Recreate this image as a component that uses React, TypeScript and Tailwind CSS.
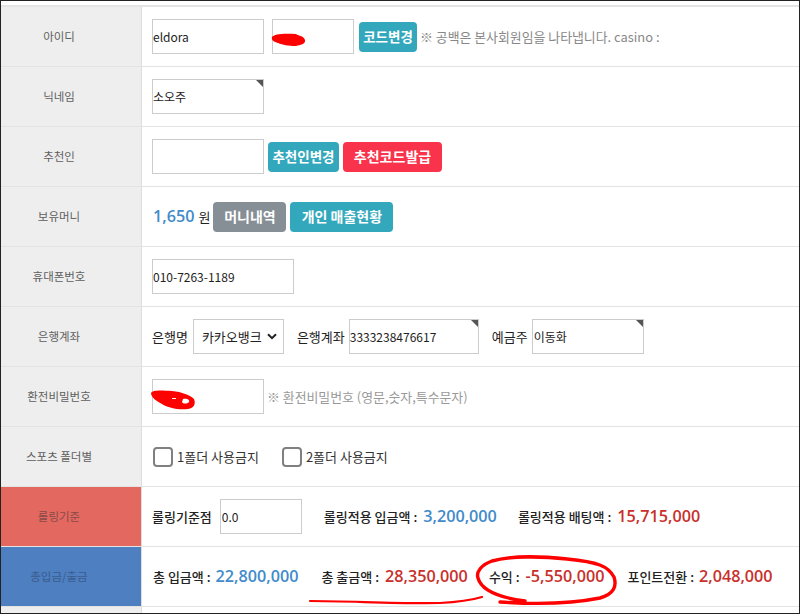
import React from "react";

const Corner = () => (
  <span className="absolute top-0 right-0 w-0 h-0 border-t-[7px] border-l-[7px] border-t-[#555555] border-l-transparent" />
);

function Field({ w, value, corner, className = "" }: { w: string; value?: string; corner?: boolean; className?: string }) {
  return (
    <div className={`relative h-[35px] shrink-0 border border-[#cccccc] bg-white flex items-center text-[12px] text-[#222222] ${w} ${className}`}>
      {value}
      {corner && <Corner />}
    </div>
  );
}

function Btn({ color, children, className = "" }: { color: string; children: React.ReactNode; className?: string }) {
  return (
    <div className={`h-[30px] shrink-0 rounded-[4px] flex items-center justify-center text-white font-bold whitespace-nowrap ${color} ${className}`}>
      {children}
    </div>
  );
}

function Row({ label, labelBg = "bg-[#eeeeee]", labelColor = "text-[#5f5f5f]", children }: { label: string; labelBg?: string; labelColor?: string; children?: React.ReactNode }) {
  return (
    <div className="flex h-[60px] border-b border-[#e3e3e3]">
      <div className={`w-[141px] shrink-0 flex items-center justify-center pr-[24px] pt-[1px] text-[11.5px] border-r border-[#dddddd] ${labelBg} ${labelColor}`}>{label}</div>
      <div className="flex-1 flex items-center min-w-0 whitespace-nowrap pl-[10px]">{children}</div>
    </div>
  );
}

const K = ({ children, className = "" }: { children: React.ReactNode; className?: string }) => (
  <span className={`text-[13px] text-[#222222] ${className}`}>{children}</span>
);
const Num = ({ c, children, className = "" }: { c: string; children: React.ReactNode; className?: string }) => (
  <span className={`text-[16.2px] font-semibold ${c} ${className}`} style={{ fontFamily: '"Open Sans", sans-serif' }}>{children}</span>
);

const Check = ({ className = "" }: { className?: string }) => (
  <span className={`inline-block w-[20px] h-[20px] rounded-[4px] border-2 border-[#808080] bg-white shrink-0 ${className}`} />
);

export default function App() {
  return (
    <div
      className="relative w-[800px] h-[614px] overflow-hidden bg-white border border-[#222222]"
      style={{ fontFamily: '"Noto Sans CJK KR", "Noto Sans", sans-serif' }}
    >
      <div className="h-[6px] bg-white border-b-2 border-[#e4e4e4]" />
      <Row label="아이디">
        <Field w="w-[112px]" value="eldora" />
        <Field w="w-[82px]" className="ml-[8px]" />
        <Btn color="bg-[#33a8bc]" className="w-[58px] ml-[5px] text-[13.5px]">코드변경</Btn>
        <span className="ml-[3px] text-[12.9px] text-[#888888]">※ 공백은 본사회원임을 나타냅니다. casino :</span>
      </Row>
      <Row label="닉네임">
        <Field w="w-[112px]" value="소오주" corner />
      </Row>
      <Row label="추천인">
        <Field w="w-[112px]" />
        <Btn color="bg-[#33a8bc]" className="w-[71px] ml-[4px] text-[13.5px]">추천인변경</Btn>
        <Btn color="bg-[#f8334b]" className="w-[99px] ml-[4px] text-[14px]">추천코드발급</Btn>
      </Row>
      <Row label="보유머니">
        <Num c="text-[#428bca]" className="ml-[1px] font-bold">1,650</Num>
        <span className="ml-[4px] text-[13px] text-[#222222]">원</span>
        <Btn color="bg-[#868e96]" className="w-[73px] ml-[3px] text-[14px]">머니내역</Btn>
        <Btn color="bg-[#33a8bc]" className="w-[103px] ml-[4px] text-[14px]">개인 매출현황</Btn>
      </Row>
      <Row label="휴대폰번호">
        <Field w="w-[142px]" value="010-7263-1189" />
      </Row>
      <Row label="은행계좌">
        <K>은행명</K>
        <div className="relative ml-[5px] w-[91px] h-[35px] shrink-0 border border-[#cccccc] flex items-center pl-[8px] text-[13px] text-[#222222]">
          카카오뱅크
          <svg className="absolute right-[6px] top-[13px]" width="10" height="7" viewBox="0 0 10 7" fill="none">
            <path d="M1 1.2 L5 5.2 L9 1.2" stroke="#222222" strokeWidth="2" />
          </svg>
        </div>
        <K className="ml-[13px]">은행계좌</K>
        <Field w="w-[130px]" value="3333238476617" corner className="ml-[4px]" />
        <K className="ml-[13px]">예금주</K>
        <Field w="w-[112px]" value="이동화" corner className="ml-[4px] pl-[1px]" />
      </Row>
      <Row label="환전비밀번호">
        <Field w="w-[112px]" />
        <span className="ml-[3px] text-[12.9px] text-[#999999]">※ 환전비밀번호 (영문,숫자,특수문자)</span>
      </Row>
      <Row label="스포츠 폴더별">
        <Check className="ml-[1px]" />
        <span className="ml-[4px] text-[13px] text-[#333333]">1폴더 사용금지</span>
        <Check className="ml-[23px]" />
        <span className="ml-[4px] text-[13px] text-[#333333]">2폴더 사용금지</span>
      </Row>
      <Row label="롤링기준" labelBg="bg-[#e26860]" labelColor="text-[#8a4a48]">
        <K className="font-medium">롤링기준점</K>
        <Field w="w-[82px]" value="0.0" className="ml-[8px] pl-[1px]" />
        <K className="ml-[22px] font-medium">롤링적용 입금액 :</K>
        <Num c="text-[#428bca]" className="ml-[6px]">3,200,000</Num>
        <K className="ml-[21px] font-medium">롤링적용 배팅액 :</K>
        <Num c="text-[#c9302c]" className="ml-[6px]">15,715,000</Num>
      </Row>
      <Row label="총입금/출금" labelBg="bg-[#4d7fc1]" labelColor="text-[#3a5c8e]">
        <K className="ml-[1px] font-medium">총 입금액 :</K>
        <Num c="text-[#428bca]" className="ml-[5px]">22,800,000</Num>
        <K className="ml-[23px] font-medium">총 출금액 :</K>
        <Num c="text-[#c9302c]" className="ml-[6px]">28,350,000</Num>
        <K className="ml-[21px] font-medium">수익 :</K>
        <Num c="text-[#c9302c]" className="ml-[6px]">-5,550,000</Num>
        <K className="ml-[23px] font-medium">포인트전환 :</K>
        <Num c="text-[#c9302c]" className="ml-[5px]">2,048,000</Num>
      </Row>
      <div className="flex h-[8px]">
        <div className="w-[141px] bg-[#eeeeee] border-r border-[#dddddd]" />
      </div>
      {/* hand-drawn red marks lying over the page */}
      <svg className="absolute left-[-1px] top-[-1px] pointer-events-none" width="800" height="614" viewBox="0 0 800 614" fill="none">
        <path d="M272 37 C274 34 283 33 296 34 C299 36 304 36 305 40 C306 44 300 45 296 46 C288 46 283 45 278 43 C274 42 271 40 272 37 Z" fill="#ff0000" />
        <path d="M151 393 C152 390 160 390 172 391 C182 392 190 395 194 399 C196 404 194 408 188 409 C178 410 168 408 162 404 C156 401 151 397 151 393 Z" fill="#ff0000" />
        <path d="M183 399 C187 398 190 400 189 402 C187 404 183 404 182 402 Z" fill="#ffffff" />
        <rect x="172" y="398" width="4" height="1" fill="#ffffff" />
        <path d="M310 601 C350 601 400 604 440 603 C460 602 472 600 482 597" stroke="#ff0000" strokeWidth="2.2" strokeLinecap="round" />
        <path d="M500 602 C530 604 570 604 600 598 C614 594 617 586 614 577 C608 566 598 562 567 559 C540 556 510 556 492 561 C481 565 476 572 478 578 C481 589 495 597 525 601" stroke="#ff0000" strokeWidth="3.4" strokeLinecap="round" />
      </svg>
    </div>
  );
}
